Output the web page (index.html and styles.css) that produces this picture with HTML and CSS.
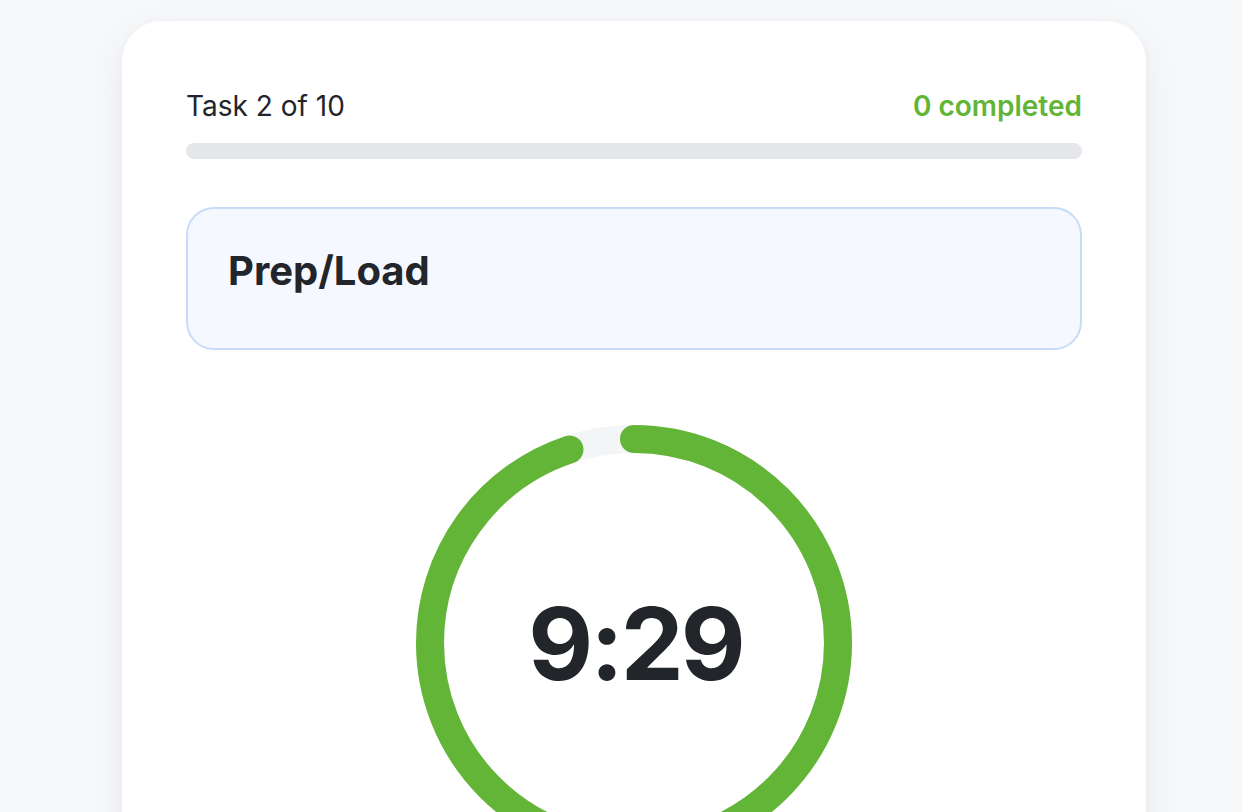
FILE: index.html
```html
<!DOCTYPE html>
<html lang="en">
<head>
<meta charset="utf-8">
<title>Task Timer</title>
<link rel="stylesheet" href="styles.css">
</head>
<body>
<main class="card">
  <div class="progress-head">
    <span class="task-count">Task 2 of 10</span>
    <span class="completed">0 completed</span>
  </div>
  <div class="bar"><div class="bar-fill" style="width:0%"></div></div>
  <section class="task-box">
    <h1 class="task-title">Prep/Load</h1>
  </section>
  <div class="ring-wrap">
    <svg class="ring" width="436" height="436" viewBox="0 0 436 436">
      <circle cx="218" cy="218" r="204" fill="none" stroke="#f4f5f7" stroke-width="28"/>
      <circle cx="218" cy="218" r="204" fill="none" stroke="#62b536" stroke-width="28" stroke-linecap="round" stroke-dasharray="1281.77" stroke-dashoffset="66.2" transform="rotate(-90 218 218)"/>
    </svg>
    <div class="time"><span class="time-text">9:29</span></div>
  </div>
</main>
</body>
</html>
```

FILE: styles.css
```css
* { box-sizing: border-box; }
html, body { margin: 0; padding: 0; }
body {
  background: #f7f8fa;
  font-family: Inter, "Noto Sans", "Liberation Sans", sans-serif;
  color: #22262b;
  overflow: hidden;
  height: 812px;
}
.card {
  margin: 21px 0 0 122px;
  width: 1024px;
  min-height: 1100px;
  background: #ffffff;
  border-radius: 40px;
  padding: 64px;
  box-shadow: 0 10px 40px rgba(30, 40, 60, 0.06), 0 2px 8px rgba(30, 40, 60, 0.03);
}
.progress-head {
  display: flex;
  justify-content: space-between;
  align-items: baseline;
  font-size: 28px;
  line-height: 42px;
}
.task-count { font-weight: 400; color: #22262b; }
.completed { font-weight: 600; color: #62b536; }
.bar {
  margin-top: 16px;
  height: 16px;
  border-radius: 8px;
  background: #e5e7eb;
  overflow: hidden;
}
.bar-fill { height: 100%; background: #62b536; }
.task-box {
  margin-top: 48px;
  height: 143px;
  border: 2px solid #c7dcf8;
  background: #f5f8fe;
  border-radius: 28px;
  padding: 38px 40px;
}
.task-title {
  margin: 0;
  font-size: 40px;
  line-height: 47px;
  font-weight: 700;
  color: #22262b;
}
.ring-wrap {
  position: relative;
  width: 436px;
  height: 436px;
  margin: 75px auto 0;
}
.ring { display: block; }
.time {
  position: absolute;
  inset: 0;
  display: flex;
  align-items: center;
  justify-content: center;
  font-size: 100px;
  font-weight: 700;
  color: #22262b;
}
.time-text {
  letter-spacing: -3px;
  margin-right: -3px;
}
```
